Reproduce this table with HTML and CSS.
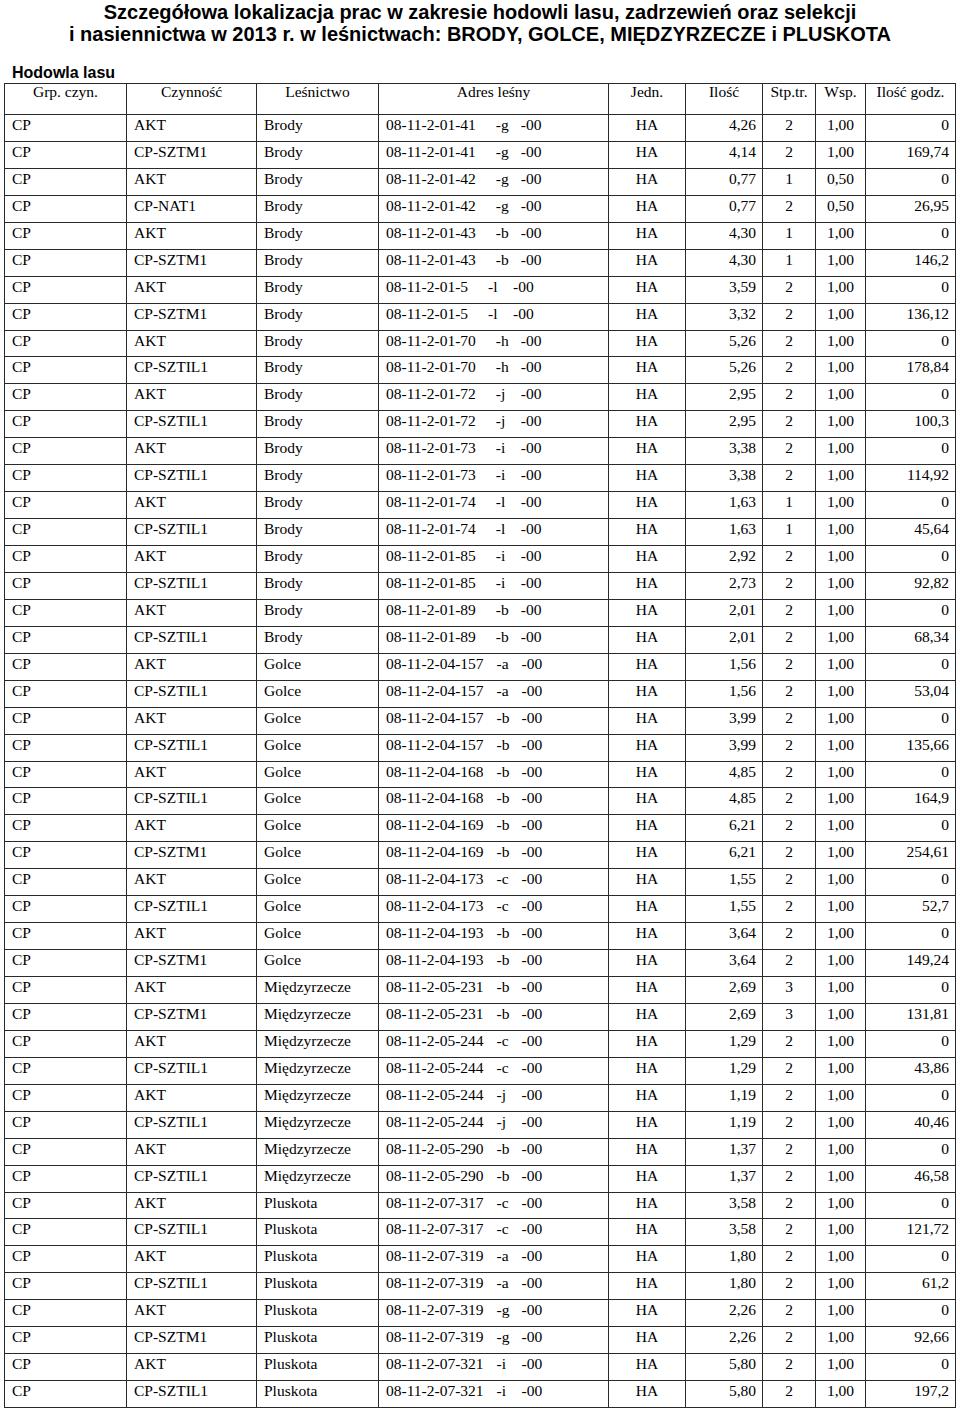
FILE: index.html
```html
<!DOCTYPE html>
<html lang="pl">
<head>
<meta charset="utf-8">
<title>Szczegółowa lokalizacja prac</title>
<link rel="stylesheet" href="styles.css">
</head>
<body>
<div class="page">
<h1 class="title">Szczegółowa lokalizacja prac w zakresie hodowli lasu, zadrzewień oraz selekcji<br>i nasiennictwa w 2013 r. w leśnictwach: BRODY, GOLCE, MIĘDZYRZECZE i PLUSKOTA</h1>
<h2 class="section">Hodowla lasu</h2>
<table class="grid">
<colgroup>
<col class="c-grp"><col class="c-czy"><col class="c-les"><col class="c-adr"><col class="c-jed"><col class="c-ilo"><col class="c-stp"><col class="c-wsp"><col class="c-god">
</colgroup>
<thead>
<tr><th>Grp. czyn.</th><th>Czynność</th><th>Leśnictwo</th><th>Adres leśny</th><th>Jedn.</th><th>Ilość</th><th>Stp.tr.</th><th>Wsp.</th><th>Ilość godz.</th></tr>
</thead>
<tbody>
<tr><td>CP</td><td>AKT</td><td>Brody</td><td><span class="nr">08-11-2-01-41</span><span class="sf">-g</span>-00</td><td class="ctr">HA</td><td class="rgt">4,26</td><td class="ctr">2</td><td class="ctr">1,00</td><td class="rgt">0</td></tr>
<tr><td>CP</td><td>CP-SZTM1</td><td>Brody</td><td><span class="nr">08-11-2-01-41</span><span class="sf">-g</span>-00</td><td class="ctr">HA</td><td class="rgt">4,14</td><td class="ctr">2</td><td class="ctr">1,00</td><td class="rgt">169,74</td></tr>
<tr><td>CP</td><td>AKT</td><td>Brody</td><td><span class="nr">08-11-2-01-42</span><span class="sf">-g</span>-00</td><td class="ctr">HA</td><td class="rgt">0,77</td><td class="ctr">1</td><td class="ctr">0,50</td><td class="rgt">0</td></tr>
<tr><td>CP</td><td>CP-NAT1</td><td>Brody</td><td><span class="nr">08-11-2-01-42</span><span class="sf">-g</span>-00</td><td class="ctr">HA</td><td class="rgt">0,77</td><td class="ctr">2</td><td class="ctr">0,50</td><td class="rgt">26,95</td></tr>
<tr><td>CP</td><td>AKT</td><td>Brody</td><td><span class="nr">08-11-2-01-43</span><span class="sf">-b</span>-00</td><td class="ctr">HA</td><td class="rgt">4,30</td><td class="ctr">1</td><td class="ctr">1,00</td><td class="rgt">0</td></tr>
<tr><td>CP</td><td>CP-SZTM1</td><td>Brody</td><td><span class="nr">08-11-2-01-43</span><span class="sf">-b</span>-00</td><td class="ctr">HA</td><td class="rgt">4,30</td><td class="ctr">1</td><td class="ctr">1,00</td><td class="rgt">146,2</td></tr>
<tr><td>CP</td><td>AKT</td><td>Brody</td><td><span class="nr">08-11-2-01-5</span><span class="sf">-l</span>-00</td><td class="ctr">HA</td><td class="rgt">3,59</td><td class="ctr">2</td><td class="ctr">1,00</td><td class="rgt">0</td></tr>
<tr><td>CP</td><td>CP-SZTM1</td><td>Brody</td><td><span class="nr">08-11-2-01-5</span><span class="sf">-l</span>-00</td><td class="ctr">HA</td><td class="rgt">3,32</td><td class="ctr">2</td><td class="ctr">1,00</td><td class="rgt">136,12</td></tr>
<tr><td>CP</td><td>AKT</td><td>Brody</td><td><span class="nr">08-11-2-01-70</span><span class="sf">-h</span>-00</td><td class="ctr">HA</td><td class="rgt">5,26</td><td class="ctr">2</td><td class="ctr">1,00</td><td class="rgt">0</td></tr>
<tr><td>CP</td><td>CP-SZTIL1</td><td>Brody</td><td><span class="nr">08-11-2-01-70</span><span class="sf">-h</span>-00</td><td class="ctr">HA</td><td class="rgt">5,26</td><td class="ctr">2</td><td class="ctr">1,00</td><td class="rgt">178,84</td></tr>
<tr><td>CP</td><td>AKT</td><td>Brody</td><td><span class="nr">08-11-2-01-72</span><span class="sf">-j</span>-00</td><td class="ctr">HA</td><td class="rgt">2,95</td><td class="ctr">2</td><td class="ctr">1,00</td><td class="rgt">0</td></tr>
<tr><td>CP</td><td>CP-SZTIL1</td><td>Brody</td><td><span class="nr">08-11-2-01-72</span><span class="sf">-j</span>-00</td><td class="ctr">HA</td><td class="rgt">2,95</td><td class="ctr">2</td><td class="ctr">1,00</td><td class="rgt">100,3</td></tr>
<tr><td>CP</td><td>AKT</td><td>Brody</td><td><span class="nr">08-11-2-01-73</span><span class="sf">-i</span>-00</td><td class="ctr">HA</td><td class="rgt">3,38</td><td class="ctr">2</td><td class="ctr">1,00</td><td class="rgt">0</td></tr>
<tr><td>CP</td><td>CP-SZTIL1</td><td>Brody</td><td><span class="nr">08-11-2-01-73</span><span class="sf">-i</span>-00</td><td class="ctr">HA</td><td class="rgt">3,38</td><td class="ctr">2</td><td class="ctr">1,00</td><td class="rgt">114,92</td></tr>
<tr><td>CP</td><td>AKT</td><td>Brody</td><td><span class="nr">08-11-2-01-74</span><span class="sf">-l</span>-00</td><td class="ctr">HA</td><td class="rgt">1,63</td><td class="ctr">1</td><td class="ctr">1,00</td><td class="rgt">0</td></tr>
<tr><td>CP</td><td>CP-SZTIL1</td><td>Brody</td><td><span class="nr">08-11-2-01-74</span><span class="sf">-l</span>-00</td><td class="ctr">HA</td><td class="rgt">1,63</td><td class="ctr">1</td><td class="ctr">1,00</td><td class="rgt">45,64</td></tr>
<tr><td>CP</td><td>AKT</td><td>Brody</td><td><span class="nr">08-11-2-01-85</span><span class="sf">-i</span>-00</td><td class="ctr">HA</td><td class="rgt">2,92</td><td class="ctr">2</td><td class="ctr">1,00</td><td class="rgt">0</td></tr>
<tr><td>CP</td><td>CP-SZTIL1</td><td>Brody</td><td><span class="nr">08-11-2-01-85</span><span class="sf">-i</span>-00</td><td class="ctr">HA</td><td class="rgt">2,73</td><td class="ctr">2</td><td class="ctr">1,00</td><td class="rgt">92,82</td></tr>
<tr><td>CP</td><td>AKT</td><td>Brody</td><td><span class="nr">08-11-2-01-89</span><span class="sf">-b</span>-00</td><td class="ctr">HA</td><td class="rgt">2,01</td><td class="ctr">2</td><td class="ctr">1,00</td><td class="rgt">0</td></tr>
<tr><td>CP</td><td>CP-SZTIL1</td><td>Brody</td><td><span class="nr">08-11-2-01-89</span><span class="sf">-b</span>-00</td><td class="ctr">HA</td><td class="rgt">2,01</td><td class="ctr">2</td><td class="ctr">1,00</td><td class="rgt">68,34</td></tr>
<tr><td>CP</td><td>AKT</td><td>Golce</td><td><span class="nr lg">08-11-2-04-157</span><span class="sf">-a</span>-00</td><td class="ctr">HA</td><td class="rgt">1,56</td><td class="ctr">2</td><td class="ctr">1,00</td><td class="rgt">0</td></tr>
<tr><td>CP</td><td>CP-SZTIL1</td><td>Golce</td><td><span class="nr lg">08-11-2-04-157</span><span class="sf">-a</span>-00</td><td class="ctr">HA</td><td class="rgt">1,56</td><td class="ctr">2</td><td class="ctr">1,00</td><td class="rgt">53,04</td></tr>
<tr><td>CP</td><td>AKT</td><td>Golce</td><td><span class="nr lg">08-11-2-04-157</span><span class="sf">-b</span>-00</td><td class="ctr">HA</td><td class="rgt">3,99</td><td class="ctr">2</td><td class="ctr">1,00</td><td class="rgt">0</td></tr>
<tr><td>CP</td><td>CP-SZTIL1</td><td>Golce</td><td><span class="nr lg">08-11-2-04-157</span><span class="sf">-b</span>-00</td><td class="ctr">HA</td><td class="rgt">3,99</td><td class="ctr">2</td><td class="ctr">1,00</td><td class="rgt">135,66</td></tr>
<tr><td>CP</td><td>AKT</td><td>Golce</td><td><span class="nr lg">08-11-2-04-168</span><span class="sf">-b</span>-00</td><td class="ctr">HA</td><td class="rgt">4,85</td><td class="ctr">2</td><td class="ctr">1,00</td><td class="rgt">0</td></tr>
<tr><td>CP</td><td>CP-SZTIL1</td><td>Golce</td><td><span class="nr lg">08-11-2-04-168</span><span class="sf">-b</span>-00</td><td class="ctr">HA</td><td class="rgt">4,85</td><td class="ctr">2</td><td class="ctr">1,00</td><td class="rgt">164,9</td></tr>
<tr><td>CP</td><td>AKT</td><td>Golce</td><td><span class="nr lg">08-11-2-04-169</span><span class="sf">-b</span>-00</td><td class="ctr">HA</td><td class="rgt">6,21</td><td class="ctr">2</td><td class="ctr">1,00</td><td class="rgt">0</td></tr>
<tr><td>CP</td><td>CP-SZTM1</td><td>Golce</td><td><span class="nr lg">08-11-2-04-169</span><span class="sf">-b</span>-00</td><td class="ctr">HA</td><td class="rgt">6,21</td><td class="ctr">2</td><td class="ctr">1,00</td><td class="rgt">254,61</td></tr>
<tr><td>CP</td><td>AKT</td><td>Golce</td><td><span class="nr lg">08-11-2-04-173</span><span class="sf">-c</span>-00</td><td class="ctr">HA</td><td class="rgt">1,55</td><td class="ctr">2</td><td class="ctr">1,00</td><td class="rgt">0</td></tr>
<tr><td>CP</td><td>CP-SZTIL1</td><td>Golce</td><td><span class="nr lg">08-11-2-04-173</span><span class="sf">-c</span>-00</td><td class="ctr">HA</td><td class="rgt">1,55</td><td class="ctr">2</td><td class="ctr">1,00</td><td class="rgt">52,7</td></tr>
<tr><td>CP</td><td>AKT</td><td>Golce</td><td><span class="nr lg">08-11-2-04-193</span><span class="sf">-b</span>-00</td><td class="ctr">HA</td><td class="rgt">3,64</td><td class="ctr">2</td><td class="ctr">1,00</td><td class="rgt">0</td></tr>
<tr><td>CP</td><td>CP-SZTM1</td><td>Golce</td><td><span class="nr lg">08-11-2-04-193</span><span class="sf">-b</span>-00</td><td class="ctr">HA</td><td class="rgt">3,64</td><td class="ctr">2</td><td class="ctr">1,00</td><td class="rgt">149,24</td></tr>
<tr><td>CP</td><td>AKT</td><td>Międzyrzecze</td><td><span class="nr lg">08-11-2-05-231</span><span class="sf">-b</span>-00</td><td class="ctr">HA</td><td class="rgt">2,69</td><td class="ctr">3</td><td class="ctr">1,00</td><td class="rgt">0</td></tr>
<tr><td>CP</td><td>CP-SZTM1</td><td>Międzyrzecze</td><td><span class="nr lg">08-11-2-05-231</span><span class="sf">-b</span>-00</td><td class="ctr">HA</td><td class="rgt">2,69</td><td class="ctr">3</td><td class="ctr">1,00</td><td class="rgt">131,81</td></tr>
<tr><td>CP</td><td>AKT</td><td>Międzyrzecze</td><td><span class="nr lg">08-11-2-05-244</span><span class="sf">-c</span>-00</td><td class="ctr">HA</td><td class="rgt">1,29</td><td class="ctr">2</td><td class="ctr">1,00</td><td class="rgt">0</td></tr>
<tr><td>CP</td><td>CP-SZTIL1</td><td>Międzyrzecze</td><td><span class="nr lg">08-11-2-05-244</span><span class="sf">-c</span>-00</td><td class="ctr">HA</td><td class="rgt">1,29</td><td class="ctr">2</td><td class="ctr">1,00</td><td class="rgt">43,86</td></tr>
<tr><td>CP</td><td>AKT</td><td>Międzyrzecze</td><td><span class="nr lg">08-11-2-05-244</span><span class="sf">-j</span>-00</td><td class="ctr">HA</td><td class="rgt">1,19</td><td class="ctr">2</td><td class="ctr">1,00</td><td class="rgt">0</td></tr>
<tr><td>CP</td><td>CP-SZTIL1</td><td>Międzyrzecze</td><td><span class="nr lg">08-11-2-05-244</span><span class="sf">-j</span>-00</td><td class="ctr">HA</td><td class="rgt">1,19</td><td class="ctr">2</td><td class="ctr">1,00</td><td class="rgt">40,46</td></tr>
<tr><td>CP</td><td>AKT</td><td>Międzyrzecze</td><td><span class="nr lg">08-11-2-05-290</span><span class="sf">-b</span>-00</td><td class="ctr">HA</td><td class="rgt">1,37</td><td class="ctr">2</td><td class="ctr">1,00</td><td class="rgt">0</td></tr>
<tr><td>CP</td><td>CP-SZTIL1</td><td>Międzyrzecze</td><td><span class="nr lg">08-11-2-05-290</span><span class="sf">-b</span>-00</td><td class="ctr">HA</td><td class="rgt">1,37</td><td class="ctr">2</td><td class="ctr">1,00</td><td class="rgt">46,58</td></tr>
<tr><td>CP</td><td>AKT</td><td>Pluskota</td><td><span class="nr lg">08-11-2-07-317</span><span class="sf">-c</span>-00</td><td class="ctr">HA</td><td class="rgt">3,58</td><td class="ctr">2</td><td class="ctr">1,00</td><td class="rgt">0</td></tr>
<tr><td>CP</td><td>CP-SZTIL1</td><td>Pluskota</td><td><span class="nr lg">08-11-2-07-317</span><span class="sf">-c</span>-00</td><td class="ctr">HA</td><td class="rgt">3,58</td><td class="ctr">2</td><td class="ctr">1,00</td><td class="rgt">121,72</td></tr>
<tr><td>CP</td><td>AKT</td><td>Pluskota</td><td><span class="nr lg">08-11-2-07-319</span><span class="sf">-a</span>-00</td><td class="ctr">HA</td><td class="rgt">1,80</td><td class="ctr">2</td><td class="ctr">1,00</td><td class="rgt">0</td></tr>
<tr><td>CP</td><td>CP-SZTIL1</td><td>Pluskota</td><td><span class="nr lg">08-11-2-07-319</span><span class="sf">-a</span>-00</td><td class="ctr">HA</td><td class="rgt">1,80</td><td class="ctr">2</td><td class="ctr">1,00</td><td class="rgt">61,2</td></tr>
<tr><td>CP</td><td>AKT</td><td>Pluskota</td><td><span class="nr lg">08-11-2-07-319</span><span class="sf">-g</span>-00</td><td class="ctr">HA</td><td class="rgt">2,26</td><td class="ctr">2</td><td class="ctr">1,00</td><td class="rgt">0</td></tr>
<tr><td>CP</td><td>CP-SZTM1</td><td>Pluskota</td><td><span class="nr lg">08-11-2-07-319</span><span class="sf">-g</span>-00</td><td class="ctr">HA</td><td class="rgt">2,26</td><td class="ctr">2</td><td class="ctr">1,00</td><td class="rgt">92,66</td></tr>
<tr><td>CP</td><td>AKT</td><td>Pluskota</td><td><span class="nr lg">08-11-2-07-321</span><span class="sf">-i</span>-00</td><td class="ctr">HA</td><td class="rgt">5,80</td><td class="ctr">2</td><td class="ctr">1,00</td><td class="rgt">0</td></tr>
<tr><td>CP</td><td>CP-SZTIL1</td><td>Pluskota</td><td><span class="nr lg">08-11-2-07-321</span><span class="sf">-i</span>-00</td><td class="ctr">HA</td><td class="rgt">5,80</td><td class="ctr">2</td><td class="ctr">1,00</td><td class="rgt">197,2</td></tr>
</tbody>
</table>
</div>
</body>
</html>
```

FILE: styles.css
```css
html, body {
  margin: 0;
  padding: 0;
  background: #ffffff;
}

.page {
  width: 960px;
  color: #000000;
}

.title {
  margin: 0;
  padding-top: 1px;
  font-family: "Liberation Sans", Arial, sans-serif;
  font-weight: bold;
  font-size: 20px;
  line-height: 22px;
  text-align: center;
}

.section {
  margin: 20px 0 2px 12px;
  font-family: "Liberation Sans", Arial, sans-serif;
  font-weight: bold;
  font-size: 16px;
  line-height: 16px;
}

.grid {
  margin-left: 4px;
  width: 951px;
  table-layout: fixed;
  border-collapse: collapse;
  font-family: "Liberation Serif", "Times New Roman", serif;
  font-size: 15.5px;
  line-height: 16px;
}

.c-grp { width: 122px; }
.c-czy { width: 130px; }
.c-les { width: 122px; }
.c-adr { width: 230px; }
.c-jed { width: 77px; }
.c-ilo { width: 77px; }
.c-stp { width: 53px; }
.c-wsp { width: 50px; }
.c-god { width: 90px; }

.grid th,
.grid td {
  border: 1px solid #2a2a2a;
  white-space: nowrap;
  overflow: hidden;
  vertical-align: top;
}

.grid th {
  height: 31px;
  box-sizing: border-box;
  padding: 0 2px;
  font-weight: normal;
  text-align: center;
}

.grid td {
  height: 26.95px;
  box-sizing: border-box;
  padding: 2px 7px 0 7px;
  text-align: left;
}

.grid td.ctr { text-align: center; padding-left: 2px; padding-right: 2px; }
.grid td.rgt { text-align: right; padding-right: 6px; }

.nr { margin-right: 20px; }
.nr.lg { margin-right: 13px; }
.sf {
  display: inline-block;
  width: 25px;
}
```
